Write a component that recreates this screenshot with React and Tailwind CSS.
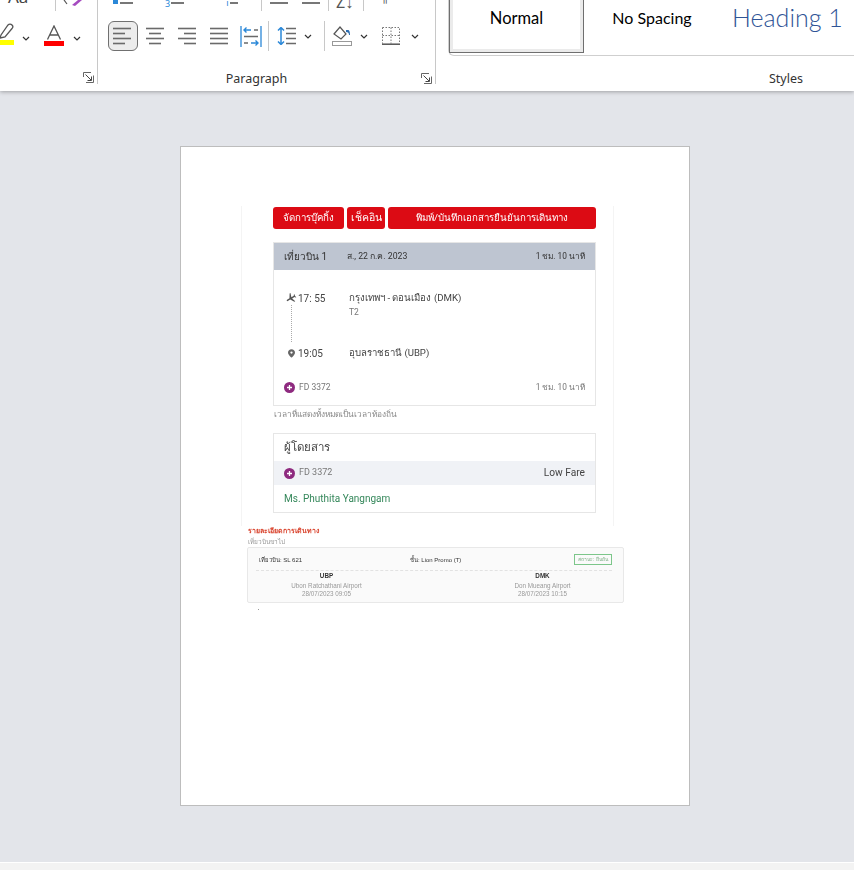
import React from 'react'

const ui = { fontFamily: '"Noto Sans", "Open Sans", sans-serif' }
const calibri = { fontFamily: 'Lato, sans-serif' }
const thai = { fontFamily: 'Roboto, "Noto Sans", sans-serif' }
const arial = { fontFamily: '"Liberation Sans", "Noto Sans", sans-serif' }

const Chevron = () => (
  <svg width="8" height="5" viewBox="0 0 8 5" className="shrink-0">
    <path d="M1 1l3 3 3-3" fill="none" stroke="#333" strokeWidth="1.2" />
  </svg>
)

const Launcher = () => (
  <svg width="11" height="11" viewBox="0 0 11 11">
    <path d="M.5 5V.5H8M10.5 3.5V10.5H3" fill="none" stroke="#666" />
    <path d="M2.5 2.5l5.5 5.5M8.5 4.5v4h-4" fill="none" stroke="#444" />
  </svg>
)

const Lines = ({ rows }) => (
  <svg width="20" height="18" viewBox="0 0 20 18">
    {rows.map(([a, b], i) => (
      <path key={i} d={`M${a} ${1.5 + i * 5}H${b}`} stroke="#6a6a6a" strokeWidth="1.6" />
    ))}
  </svg>
)

const Sep = ({ cls }) => <div className={`w-px bg-[#c8c8c8] ${cls}`} />

const RibbonLabel = ({ label, launcher, shift }) => (
  <div className="grid grid-cols-[1fr_auto_1fr] items-center h-[13px] shrink-0 text-[12.500px] leading-[13px] text-[#333]" style={ui}>
    <div />
    <span className={`pt-px ${shift || ''}`}>{label}</span>
    <div className="flex justify-end pr-[3px]">{launcher && <Launcher />}</div>
  </div>
)

const FontGroup = () => (
  <div className="w-[98px] shrink-0 h-[84px] border-r border-[#c8c8c8] flex flex-col">
    <div className="h-[12px] shrink-0 flex overflow-hidden relative">
      <span className="ml-[8px] -mt-[14px] w-[47px] text-[17px] leading-[22px] text-[#444]" style={ui}>Aa</span>
      <Sep cls="h-[11px]" />
      <svg width="20" height="8" viewBox="0 0 20 8" className="ml-[7px]">
        <path d="M1 0l3 4" stroke="#555" strokeWidth="1.2" fill="none" />
        <path d="M9 5l6-5h4l-7 6z" fill="#a54bc0" />
      </svg>
    </div>
    <div className="mt-[11px] flex items-start h-[24px] shrink-0">
      <div className="w-[14px] overflow-hidden flex flex-col h-[24px]">
        <svg width="14" height="17" viewBox="0 0 14 17" className="shrink-0">
          <path d="M0 15l1-3 7-10c1-1 3-1 4 0s1 2.500 0 3.500L5 14z" fill="none" stroke="#555" strokeWidth="1.300" />
        </svg>
        <div className="h-[5px] bg-[#ffff00]" />
      </div>
      <div className="ml-[8px] mt-[13px]"><Chevron /></div>
      <div className="ml-[14px] w-[20px] flex flex-col items-center">
        <svg width="16" height="15" viewBox="0 0 16 15" className="mt-[2px]">
          <path d="M1.500 14.500L8 1l6.500 13.500M4 10h8" fill="none" stroke="#555" strokeWidth="1.300" />
        </svg>
        <div className="w-[20px] h-[5px] mt-[1px] bg-[#ff0000]" />
      </div>
      <div className="ml-[9px] mt-[13px]"><Chevron /></div>
    </div>
    <div className="mt-[24px]"><RibbonLabel label="" launcher /></div>
  </div>
)

const ParagraphGroup = () => (
  <div className="w-[338px] shrink-0 h-[84px] border-r border-[#c8c8c8] flex flex-col">
    <div className="h-[12px] shrink-0 flex overflow-hidden text-[#2b88d8] text-[9px] leading-[10px]" style={ui}>
      <div className="flex items-start pl-[15px] w-[163px]">
        <div className="w-[5px] h-[4px] bg-[#2b88d8] mr-[2px]" />
        <div className="w-[13px] h-[1.500px] mt-[2px] bg-[#777]" />
        <span className="ml-[32px] -mt-[1px]">3</span>
        <div className="w-[13px] h-[1.500px] mt-[2px] ml-[1px] bg-[#777]" />
        <span className="ml-[42px] -mt-[2px]">i</span>
        <div className="w-[8px] h-[1.500px] mt-[2px] ml-[2px] bg-[#777]" />
      </div>
      <Sep cls="h-[11px]" />
      <div className="ml-[8px] w-[18px] h-[1.500px] mt-[2px] bg-[#777]" />
      <div className="ml-[14px] w-[18px] h-[1.500px] mt-[2px] bg-[#777]" />
      <Sep cls="h-[11px] ml-[8px]" />
      <span className="ml-[7px] w-[27px] -mt-[8px] text-[#555] text-[16px] leading-[20px]">Z↓</span>
      <Sep cls="h-[11px]" />
      <span className="ml-[15px] -mt-[10px] text-[#555] text-[14px] leading-[14px]">¶</span>
    </div>
    <div className="mt-[9px] flex items-center h-[30px] shrink-0 pl-[10px]">
      <div className="w-[30px] h-[30px] mr-[1px] rounded-md border border-[#707070] bg-[#ececec] flex items-center justify-center">
        <Lines rows={[[0, 18], [0, 12], [0, 18], [0, 12]]} />
      </div>
      <div className="w-[32px] flex justify-center"><Lines rows={[[1, 19], [4, 16], [1, 19], [4, 16]]} /></div>
      <div className="w-[32px] flex justify-center"><Lines rows={[[1, 19], [7, 19], [1, 19], [7, 19]]} /></div>
      <div className="w-[32px] flex justify-center"><Lines rows={[[1, 19], [1, 19], [1, 19], [1, 19]]} /></div>
      <div className="w-[32px] flex justify-center">
        <svg width="22" height="21" viewBox="0 0 22 21">
          <path d="M1 0v21M21 0v21" stroke="#2b88d8" strokeWidth="1.300" />
          <path d="M11 4H4M6.500 1.500L4 4l2.500 2.500M11 17h7M15.500 14.500L18 17l-2.500 2.500" fill="none" stroke="#2b88d8" strokeWidth="1.400" />
          <path d="M14 4h4M4 10.500h14M4 17h4" stroke="#6a6a6a" strokeWidth="1.500" />
        </svg>
      </div>
      <Sep cls="h-[30px] ml-[1px]" />
      <svg width="20" height="18" viewBox="0 0 20 18" className="ml-[8px]">
        <path d="M4 0v18M1 3.500L4 .5l3 3M1 14.500l3 3 3-3" fill="none" stroke="#2b88d8" strokeWidth="1.500" />
        <path d="M9 1.500h10M9 6.500h10M9 11.500h10M9 16.500h10" stroke="#6a6a6a" strokeWidth="1.600" />
      </svg>
      <div className="ml-[7px]"><Chevron /></div>
      <Sep cls="h-[30px] ml-[12px]" />
      <svg width="20" height="20" viewBox="0 0 20 20" className="ml-[7px]">
        <path d="M2 8l6-7 6 7-5 5z" fill="none" stroke="#555" strokeWidth="1.200" />
        <path d="M14 4h2c1 0 2 1 2 5h-1c0-2-1-3-3-3z" fill="#2b6cb0" />
        <rect x="0.500" y="15.500" width="19" height="4" fill="#fff" stroke="#999" />
      </svg>
      <div className="ml-[8px]"><Chevron /></div>
      <svg width="18" height="18" viewBox="0 0 18 18" className="ml-[14px]">
        <path d="M.5.500h17v16M.5.500v16M.5 8.500h17M9 .5v16" fill="none" stroke="#777" strokeDasharray="1.500 1.500" />
        <path d="M0 17.200h18" stroke="#555" strokeWidth="1.500" />
      </svg>
      <div className="ml-[11px]"><Chevron /></div>
    </div>
    <div className="mt-[20px]"><RibbonLabel label="Paragraph" launcher shift="-translate-x-[10px]" /></div>
  </div>
)

const StylesGroup = () => (
  <div className="w-[700px] shrink-0 h-[84px] flex flex-col">
    <div className="ml-[12px] w-[690px] h-[56px] shrink-0 border-l border-b border-[#cfcfcf] rounded-bl-md flex items-start" style={calibri}>
      <div className="w-[135px] h-[53px] border-x border-b border-[#6f6f6f] bg-[#ebebeb] px-[3px] pb-[3px]">
        <div className="h-full bg-white flex items-center justify-center text-[16.500px] text-black pb-[12px]">Normal</div>
      </div>
      <div className="w-[136px] h-[36px] flex items-center justify-center text-[16px] text-black">No Spacing</div>
      <div className="pl-[12px] h-[36px] flex items-center text-[25px] font-light text-[#2f5496]">Heading 1</div>
    </div>
    <div className="mt-[15px]"><RibbonLabel label="Styles" /></div>
  </div>
)

const PlaneIcon = () => (
  <svg width="12" height="12" viewBox="0 0 24 24">
    <path d="M21 16v-2l-8-5V3.500a1.500 1.500 0 0 0-3 0V9l-8 5v2l8-2.500V19l-2 1.500V22l3.500-1 3.500 1v-1.500L13 19v-5.500z" fill="#555" transform="rotate(-120 12 12)" />
  </svg>
)

const PinIcon = () => (
  <svg width="7" height="9" viewBox="0 0 9 11">
    <path d="M4.500 0C2 0 0 2 0 4.300 0 7.500 4.500 11 4.500 11S9 7.500 9 4.300C9 2 7 0 4.500 0z" fill="#666" />
    <circle cx="4.500" cy="4.300" r="1.500" fill="#fff" />
  </svg>
)

const AirlineDot = () => (
  <div className="w-[11px] h-[11px] rounded-full bg-[#8e2a7f] flex items-center justify-center shrink-0">
    <svg width="7" height="7" viewBox="0 0 7 7"><path d="M3.500 1v5M1 3.500h5" stroke="#fff" strokeWidth="1.300" /></svg>
  </div>
)

const BookingShot = () => (
  <div className="ml-[60px] w-[373px] h-[320px] border-x border-[#f4f4f4] pl-[31px] pr-[17px] pt-px blur-[0.45px]" style={thai}>
    <div className="flex gap-[3px] h-[22px] text-[9.700px] text-white">
      <div className="w-[71px] bg-[#dc0b14] rounded-[3px] flex items-center justify-center">จัดการบุ๊คกิ้ง</div>
      <div className="w-[38px] bg-[#dc0b14] rounded-[3px] flex items-center justify-center text-[10.500px]">เช็คอิน</div>
      <div className="flex-1 bg-[#dc0b14] rounded-[3px] flex items-center justify-center">พิมพ์/บันทึกเอกสารยืนยันการเดินทาง</div>
    </div>
    <div className="mt-[13px] h-[164px] border border-[#e6e6e6] flex flex-col">
      <div className="h-[27px] bg-[#bec5d1] flex items-center px-[10px] text-[#333]">
        <span className="w-[63px] text-[10px]">เที่ยวบิน 1</span>
        <span className="text-[8.700px] flex-1">ส., 22 ก.ค. 2023</span>
        <span className="text-[8.300px]">1 ชม. 10 นาที</span>
      </div>
      <div className="pt-[21px] pl-[11px] flex flex-col">
        <div className="flex items-center h-[14px]">
          <PlaneIcon />
          <span className="ml-[1px] w-[51px] text-[10px] text-[#444]">17: 55</span>
          <span className="text-[9.700px] text-[#444]">กรุงเทพฯ - ดอนเมือง (DMK)</span>
        </div>
        <div className="flex h-[41px]">
          <div className="ml-[6px] w-px h-[37px] border-l border-dotted border-[#aaa]" />
          <span className="ml-[57px] mt-px text-[8.500px] leading-[12px] text-[#777]">T2</span>
        </div>
        <div className="flex items-center h-[14px]">
          <div className="w-[12px] flex justify-center"><PinIcon /></div>
          <span className="ml-[1px] w-[51px] text-[10px] text-[#444]">19:05</span>
          <span className="text-[9.600px] text-[#444]">อุบลราชธานี (UBP)</span>
        </div>
      </div>
      <div className="mt-[21px] flex items-center px-[10px] text-[8.500px] text-[#777]">
        <AirlineDot />
        <span className="ml-[4px] flex-1">FD 3372</span>
        <span className="text-[8.300px]">1 ชม. 10 นาที</span>
      </div>
    </div>
    <div className="h-[27px] pt-[2px] pl-px text-[8.300px] leading-[12px] text-[#888]">เวลาที่แสดงทั้งหมดเป็นเวลาท้องถิ่น</div>
    <div className="h-[80px] border border-[#e6e6e6] flex flex-col">
      <div className="h-[27px] pl-[10px] flex items-center text-[11.500px] text-[#444]">ผู้โดยสาร</div>
      <div className="h-[24px] bg-[#f0f2f6] px-[10px] flex items-center">
        <AirlineDot />
        <span className="ml-[4px] flex-1 text-[9px] text-[#777]">FD 3372</span>
        <span className="text-[10.200px] text-[#444]">Low Fare</span>
      </div>
      <div className="pl-[10px] pt-[6px] text-[10px] text-[#34875a]">Ms. Phuthita Yangngam</div>
    </div>
  </div>
)

const TravelShot = () => (
  <div className="ml-[66px] w-[377px] blur-[0.35px]" style={arial}>
    <div className="h-[10px] pl-px text-[7px] leading-[10px] font-bold text-[#d9442e]" style={ui}>รายละเอียดการเดินทาง</div>
    <div className="h-[11px] pl-px text-[6.500px] leading-[11px] text-[#999]" style={ui}>เที่ยวบินขาไป</div>
    <div className="h-[56px] bg-[#fafafa] border border-[#e8e8e8] rounded-[2px] pl-[8px] pr-[11px] pt-[6px]">
      <div className="flex items-start h-[17px] border-b border-dashed border-[#e2e2e2] text-[6px] leading-[12px] text-[#333]">
        <span className="pl-[3px] w-[154px]">เที่ยวบิน: SL 621</span>
        <span className="flex-1">ชั้น: Lion Promo (T)</span>
        <span className="w-[38px] h-[11px] text-center border border-[#7cc68a] text-[#7cae85] text-[5px] leading-[9px]">สถานะ: ยืนยัน</span>
      </div>
      <div className="flex pt-px text-[6.300px] leading-[8px] text-center text-[#999]">
        <div className="w-[140px] ml-[1px]">
          <div className="font-bold text-[#333]">UBP</div>
          <div className="mt-[2px]">Ubon Ratchathani Airport</div>
          <div>28/07/2023 09:05</div>
        </div>
        <div className="w-[140px] ml-[77px]">
          <div className="font-bold text-[#333]">DMK</div>
          <div className="mt-[2px]">Don Mueang Airport</div>
          <div>28/07/2023 10:15</div>
        </div>
      </div>
    </div>
    <div className="ml-[11px] mt-[6px] w-px h-px bg-[#999]" />
  </div>
)

const App = () => {
  return (
    <div className="w-[854px] h-[870px] overflow-hidden flex flex-col bg-[#e3e5ea]">
      <div className="relative z-10 h-[91px] shrink-0 bg-white flex shadow-[0_1px_4px_rgba(0,0,0,0.3)]">
        <FontGroup />
        <ParagraphGroup />
        <StylesGroup />
      </div>
      <div className="flex-1 pt-[55px] pl-[180px]">
        <div className="w-[510px] h-[660px] bg-white border border-[#bdbdbd] pt-[59px]">
          <BookingShot />
          <TravelShot />
        </div>
      </div>
      <div className="h-[8px] shrink-0 border-t border-white bg-[#f3f3f3]" />
    </div>
  )
}

export default App
